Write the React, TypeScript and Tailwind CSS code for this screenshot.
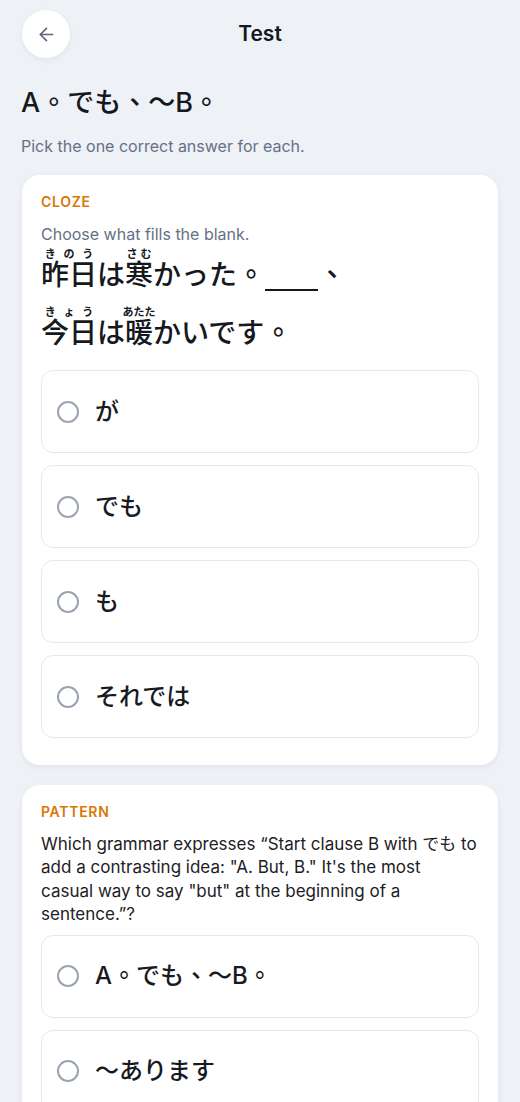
import { ArrowLeft } from "lucide-react";

type Question = {
  kind: string;
  options: string[];
};

const font = { fontFamily: 'Inter, "Noto Sans CJK TC", sans-serif' };

function Option({ label }: { label: string }) {
  return (
    <button className="flex h-[83px] w-full items-center gap-4 rounded-xl border border-[#e5e9f0] bg-white px-[15px] text-left">
      <span className="size-[22px] shrink-0 rounded-full border-2 border-[#9aa3b2]" />
      <span className="text-[24px] font-medium text-[#171a1f]">{label}</span>
    </button>
  );
}

function Card({ question, children }: { question: Question; children: React.ReactNode }) {
  return (
    <div className="rounded-[18px] bg-white px-[19px] pb-[27px] pt-[17px] shadow-[0_2px_6px_rgba(15,23,42,0.06)]">
      <p className="text-sm leading-5 font-semibold tracking-wider text-[#d97706]">{question.kind}</p>
      {children}
      <div className="mt-2 flex flex-col gap-3">
        {question.options.map((o) => (
          <Option key={o} label={o} />
        ))}
      </div>
    </div>
  );
}

export default function App() {
  const cloze: Question = { kind: "CLOZE", options: ["が", "でも", "も", "それでは"] };
  const pattern: Question = {
    kind: "PATTERN",
    options: ["A。でも、〜B。", "〜あります", "〜から", "〜けど"],
  };

  return (
    <div className="min-h-screen bg-[#eef1f6] px-[22px] pb-10 pt-[10px]" style={font}>
      <div className="grid grid-cols-[48px_1fr_48px] items-center">
        <button className="flex size-12 items-center justify-center rounded-full bg-white shadow-[0_2px_6px_rgba(15,23,42,0.06)]">
          <ArrowLeft size={21} strokeWidth={1.8} className="text-[#5b6474]" />
        </button>
        <h1 className="text-center text-[21px] font-semibold text-[#15181d]">Test</h1>
        <div />
      </div>

      <h2 className="mt-[27px] -ml-px text-[27px] leading-9 font-medium text-[#15181d]">A。でも、〜B。</h2>
      <p className="mt-[13px] -ml-px text-base leading-6 text-[#667085]">Pick the one correct answer for each.</p>

      <div className="mt-[17px] flex flex-col gap-5">
        <Card question={cloze}>
          <p className="mt-[10px] text-base leading-6 text-[#667085]">Choose what fills the blank.</p>
          <div className="text-[28px] font-medium text-[#15181d]">
            <div className="leading-[58px]">
              <ruby>
                昨日<rt className="text-[11px] font-semibold">きのう</rt>
              </ruby>
              は
              <ruby>
                寒<rt className="text-[11px] font-semibold">さむ</rt>
              </ruby>
              かった。
              <span className="inline-block w-[53px] border-b-2 border-[#15181d] align-baseline leading-none">&nbsp;</span>
              、
            </div>
            <div className="leading-[58px]">
              <ruby>
                今日<rt className="text-[11px] font-semibold">きょう</rt>
              </ruby>
              は
              <ruby>
                暖<rt className="text-[11px] font-semibold">あたた</rt>
              </ruby>
              かいです。
            </div>
          </div>
        </Card>

        <Card question={pattern}>
          <p className="mt-[11px] mb-1 text-[17px] leading-[23.4px] text-[#1d2026]">
            Which grammar expresses “Start clause B with でも to add a contrasting idea: "A. But, B." It's the most
            <br />
            casual way to say "but" at the beginning of a
            <br />
            sentence.”?
          </p>
        </Card>
      </div>
    </div>
  );
}
